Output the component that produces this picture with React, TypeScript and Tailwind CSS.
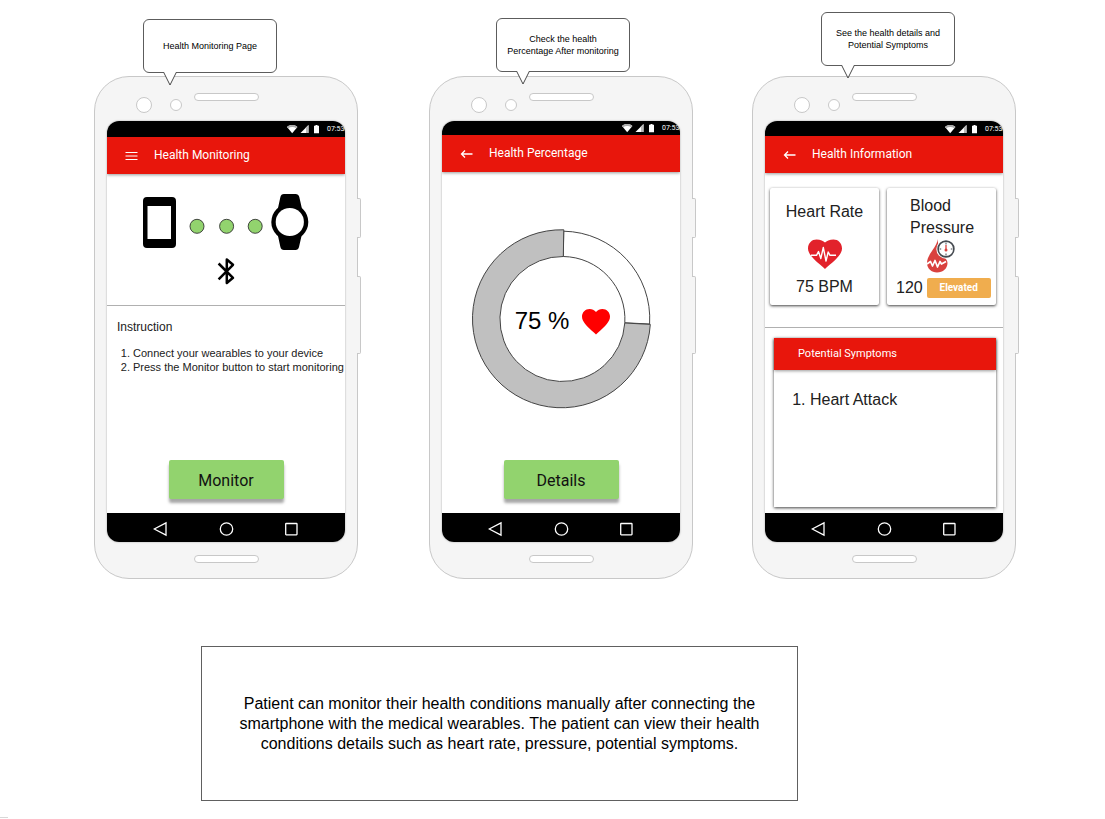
import type { ReactNode } from "react";

function Callout({ children }: { children: ReactNode }) {
  return (
    <p className="relative z-10 flex h-[54px] w-[134px] items-center justify-center rounded-md border border-[#5c5c5c] bg-white text-center font-['Liberation_Sans',sans-serif] text-[9px] leading-3 text-black">
      <span>{children}</span>
      <svg className="absolute top-[52px] left-[19px]" width="14" height="14" viewBox="0 0 14 14" aria-hidden="true">
        <path d="M0.5 0L7 13L13.5 0" fill="#fff" stroke="#4a4a4a" />
      </svg>
    </p>
  );
}

function StatusBar({ className }: { className: string }) {
  return (
    <div className={`flex shrink-0 items-center justify-end overflow-hidden bg-black text-white ${className}`}>
      <svg width="33" height="10" viewBox="0 0 33 10" aria-hidden="true">
        <path d="M0 3C3 0.4 7.4 0.4 10.400 3L5.200 9.200Z" fill="#fff" />
        <path d="M0 3C3 0.4 7.4 0.4 10.400 3L9.300 4.300C6.800 2.400 3.600 2.400 1.100 4.300Z" fill="#aaa" />
        <path d="M13.500 9L21.500 1V9Z" fill="#fff" />
        <path d="M19 3.500L21.500 1V9H19Z" fill="#bbb" />
        <path d="M27 1.800H28.500V1H30.500V1.800H32V9.200H27Z" fill="#fff" />
      </svg>
      <span className="ml-[7px] w-[18px] font-[Roboto,sans-serif] text-[7px] leading-3 whitespace-nowrap">07:53</span>
    </div>
  );
}

function AppBar({ title, icon }: { title: string; icon: "menu" | "back" }) {
  return (
    <header className="relative z-10 flex h-[37px] shrink-0 items-center gap-4 bg-[#e8160c] pl-[18px] text-white shadow-[0_1px_3px_rgba(0,0,0,0.4)]">
      <button type="button" aria-label={icon === "menu" ? "Menu" : "Back"} className="pt-px">
        <svg width="13" height="12" viewBox="0 0 13 12" fill="none" stroke="#fff" aria-hidden="true">
          {icon === "menu" ? (
            <path d="M0.500 2.500H12.500M0.500 6H12.500M0.500 9.500H12.500" />
          ) : (
            <path d="M12.500 6H1.500M5 2.500L1.500 6L5 9.500" strokeWidth="1.300" />
          )}
        </svg>
      </button>
      <h2 className="pb-[2px] font-[Roboto,sans-serif] text-xs">{title}</h2>
    </header>
  );
}

function NavBar() {
  return (
    <nav className="flex h-[29px] shrink-0 items-center justify-between bg-black px-[46px] pt-[3px]">
      <button type="button" aria-label="Back">
        <svg width="14" height="16" viewBox="0 0 14 16" fill="none" stroke="#fff" strokeWidth="1.300" aria-hidden="true">
          <path d="M1.200 8L13 1.800V14.200Z" />
        </svg>
      </button>
      <button type="button" aria-label="Home">
        <svg width="15" height="16" viewBox="0 0 15 16" fill="none" stroke="#fff" strokeWidth="1.300" aria-hidden="true">
          <circle cx="7.500" cy="8" r="6.200" />
        </svg>
      </button>
      <button type="button" aria-label="Recent apps">
        <svg width="14" height="16" viewBox="0 0 14 16" fill="none" stroke="#fff" strokeWidth="1.300" aria-hidden="true">
          <rect x="0.700" y="2.500" width="11.300" height="11.300" rx="0.500" />
        </svg>
      </button>
    </nav>
  );
}

function Phone({ statusBar, title, icon, children }: { statusBar: string; title: string; icon: "menu" | "back"; children: ReactNode }) {
  return (
    <div className="relative rounded-[35px] border border-[#c8c8c8] bg-[#f5f5f5] px-3">
      <span className="absolute top-[121px] -right-1 h-10 w-1 rounded-r-xs border border-l-0 border-[#c8c8c8] bg-[#f5f5f5]" />
      <span className="absolute top-[199px] -right-1 h-[78px] w-1 rounded-r-xs border border-l-0 border-[#c8c8c8] bg-[#f5f5f5]" />
      <div className="flex h-11 items-start pt-4 pl-[29px]">
        <span className="mt-1 size-4 rounded-full border border-[#c8c8c8] bg-white" />
        <span className="mt-[6px] ml-[18px] size-3 rounded-full border border-[#c8c8c8] bg-white" />
        <span className="ml-3 h-2 w-[65px] rounded-full border border-[#c8c8c8] bg-white" />
      </div>
      <div className="flex h-[421px] flex-col overflow-hidden rounded-xl bg-white shadow-[0_0_2px_rgba(0,0,0,0.35)]">
        <StatusBar className={statusBar} />
        <AppBar title={title} icon={icon} />
        <div className="flex min-h-0 flex-1 flex-col">{children}</div>
        <NavBar />
      </div>
      <div className="flex h-9 justify-center pt-[13px]">
        <span className="h-2 w-[65px] rounded-full border border-[#c8c8c8] bg-white" />
      </div>
    </div>
  );
}

function ActionButton({ children }: { children: ReactNode }) {
  return (
    <button
      type="button"
      className="mt-auto mb-[14px] flex h-[39px] w-[115px] items-center justify-center self-center rounded-xs bg-[#92d36e] pt-[3px] font-[Roboto,sans-serif] text-base text-[#111] shadow-[0_4px_3px_rgba(0,0,0,0.35)]"
    >
      {children}
    </button>
  );
}

function DevicesDrawing() {
  return (
    <svg className="mt-[15px] ml-[35px]" width="170" height="98" viewBox="0 0 170 98" role="img" aria-label="Phone paired with a watch over Bluetooth">
      <path
        fillRule="evenodd"
        d="M5 8H30Q34 8 34 12V55Q34 59 30 59H5Q1 59 1 55V12Q1 8 5 8ZM5.500 17V50H29V17Z"
      />
      <g fill="#92d36e" stroke="#333" strokeWidth="0.900">
        <circle cx="55" cy="37.300" r="7" />
        <circle cx="84.600" cy="37.300" r="7" />
        <circle cx="113.200" cy="37.300" r="7" />
      </g>
      <path d="M142 5H153.500Q156.500 5 157.300 8L160 20L159.500 47L157 58Q156.300 61 153.500 61H142Q139 61 138.400 58L135.800 46V20L138.400 8Q139 5 142 5Z" />
      <circle cx="147.800" cy="33" r="18.500" />
      <circle cx="147.800" cy="33" r="14.100" fill="#fff" />
      <path
        d="M76.600 74.500L91 88.800L84.800 94V70.500L91 75.800L76.600 90.300"
        fill="none"
        stroke="#000"
        strokeWidth="2.500"
        strokeLinejoin="round"
      />
    </svg>
  );
}

function PercentageRing() {
  return (
    <svg className="col-start-1 row-start-1" width="180" height="180" viewBox="-1 0 180 180" aria-hidden="true">
      <g stroke="#444" strokeWidth="1">
        <path d="M91.700 2.200A87.500 87.500 0 0 1 177.600 95L152.800 93.800A62.500 62.500 0 0 0 91.300 27.500Z" fill="#fff" />
        <path d="M91.800 0.800A89 89 0 1 0 178.300 95.400L152.800 94A62.500 62.500 0 1 1 91.300 27.500Z" fill="#c0c0c0" />
      </g>
    </svg>
  );
}

function HeartPulse() {
  return (
    <svg width="36" height="30" viewBox="0 0 36 30" aria-hidden="true">
      <path d="M18 30C14.500 26 1 17.500 1 9.500C1 4 5 0.600 9.500 0.600C13.500 0.600 16.500 2.200 18 3.600C19.500 2.200 22.500 0.600 26.500 0.600C31 0.600 35 4 35 9.500C35 17.500 21.500 26 18 30Z" fill="#e2222b" />
      <path d="M4 16.300H9.500L11.500 12.500L13.800 19.500L16.300 8.500L19 22L21.200 13L23 16.300H29" fill="none" stroke="#fff" strokeWidth="1.400" strokeLinejoin="round" />
    </svg>
  );
}

function BloodDrop() {
  return (
    <svg width="30" height="34" viewBox="0 0 30 34" aria-hidden="true">
      <path d="M11.500 0C11.500 8 1 15 1 24C1 29.500 5.500 33.500 11 33.500C17 33.500 21.500 29.500 21.500 24C21.500 19 13 15 11.500 0Z" fill="#d9413e" />
      <path d="M1 25L4.500 22.500L6.500 27L9 21.500L11.500 28L14 22.500L15.500 25L20 22.500" fill="none" stroke="#fff" strokeWidth="1.700" strokeLinejoin="round" />
      <circle cx="20" cy="10" r="9.700" fill="#fff" />
      <circle cx="20" cy="10" r="7.900" fill="#fff" stroke="#454a50" strokeWidth="1.600" />
      <path d="M20 3.500V5.500M20 14.500V16.500M13.500 10H15.200M24.800 10H26.500" stroke="#454a50" />
      <path d="M20 6V11" stroke="#d9413e" strokeWidth="1.300" />
      <circle cx="20" cy="11" r="1.500" fill="#d9413e" />
    </svg>
  );
}

const cardShadow = "shadow-[0_1px_3px_rgba(0,0,0,0.75)]";

export default function App() {
  return (
    <main className="min-h-screen bg-white font-['Liberation_Sans',sans-serif] text-[#212121]">
      <div className="flex items-start pl-[94px]">
        <section className="w-[264px] shrink-0">
          <div className="h-[76px] pt-[19px] pl-[49px]">
            <Callout>Health Monitoring Page</Callout>
          </div>
          <Phone statusBar="h-4" title="Health Monitoring" icon="menu">
            <div className="h-[132px] shrink-0 border-b border-[#b0b0b0]">
              <DevicesDrawing />
            </div>
            <h3 className="mt-[11px] pl-[10px] text-xs leading-5">Instruction</h3>
            <ol className="mt-[9px] list-decimal pl-[26px] text-[11px] leading-[14px] whitespace-nowrap">
              <li>Connect your wearables to your device</li>
              <li>Press the Monitor button to start monitoring</li>
            </ol>
            <ActionButton>Monitor</ActionButton>
          </Phone>
        </section>

        <section className="ml-[71px] w-[264px] shrink-0">
          <div className="h-[76px] pt-[18px] pl-[67px]">
            <Callout>
              Check the health
              <br />
              Percentage After monitoring
            </Callout>
          </div>
          <Phone statusBar="h-[14px]" title="Health Percentage" icon="back">
            <div className="mt-[57px] grid place-items-center">
              <PercentageRing />
              <div className="col-start-1 row-start-1 flex items-center gap-3 pt-1 pl-1">
                <span className="text-2xl text-black">75 %</span>
                <svg width="30" height="28" viewBox="0 0 30 28" aria-hidden="true">
                  <path d="M15 27.500L12.900 25.600C5.600 19 1 14.800 1 9.600C1 5.400 4.300 2 8.600 2C11 2 13.400 3.200 15 5C16.600 3.200 19 2 21.400 2C25.700 2 29 5.400 29 9.600C29 14.800 24.400 19 17.100 25.600Z" fill="#ff0000" />
                </svg>
              </div>
            </div>
            <ActionButton>Details</ActionButton>
          </Phone>
        </section>

        <section className="ml-[59px] w-[264px] shrink-0">
          <div className="h-[76px] pt-3 pl-[69px]">
            <Callout>
              See the health details and
              <br />
              Potential Symptoms
            </Callout>
          </div>
          <Phone statusBar="h-[15px]" title="Health Information" icon="back">
            <div className="flex h-[155px] shrink-0 gap-2 border-b border-[#b0b0b0] pt-[15px] pl-[5px] text-base">
              <article className={`flex h-[117px] w-[109px] flex-col items-center rounded-xs bg-white pt-[13px] ${cardShadow}`}>
                <h3 className="leading-[22px]">Heart Rate</h3>
                <div className="mt-4">
                  <HeartPulse />
                </div>
                <p className="mt-[7px] leading-[22px]">75 BPM</p>
              </article>
              <article className={`flex h-[117px] w-[109px] flex-col rounded-xs bg-white pt-[7px] ${cardShadow}`}>
                <h3 className="pl-[23px] leading-[22px]">
                  Blood
                  <br />
                  Pressure
                </h3>
                <div className="pl-[39px]">
                  <BloodDrop />
                </div>
                <p className="mt-1 flex items-center gap-1 pl-[9px]">
                  <span className="leading-[22px]">120</span>
                  <span className="h-5 w-16 rounded-xs bg-[#f0ad4e] text-center font-[Roboto,sans-serif] text-[10px] leading-5 font-bold text-white">Elevated</span>
                </p>
              </article>
            </div>
            <article className={`mt-[10px] mr-[7px] ml-[9px] h-[169px] shrink-0 bg-white ${cardShadow}`}>
              <h3 className="h-8 bg-[#e8160c] pl-6 font-[Roboto,sans-serif] text-[11px] leading-8 text-white shadow-[0_1px_3px_rgba(0,0,0,0.4)]">
                Potential Symptoms
              </h3>
              <ol className="mt-[18px] list-decimal pl-9 text-base leading-6">
                <li>Heart Attack</li>
              </ol>
            </article>
          </Phone>
        </section>
      </div>

      <p className="mt-[67px] ml-[201px] flex h-[155px] w-[597px] items-center justify-center border border-[#606060] text-center text-base leading-5 text-black">
        <span>
          Patient can monitor their health conditions manually after connecting the
          <br />
          smartphone with the medical wearables. The patient can view their health
          <br />
          conditions details such as heart rate, pressure, potential symptoms.
        </span>
      </p>
      <div className="mt-4 h-px w-2 bg-[#d8d8d8]" />
    </main>
  );
}
